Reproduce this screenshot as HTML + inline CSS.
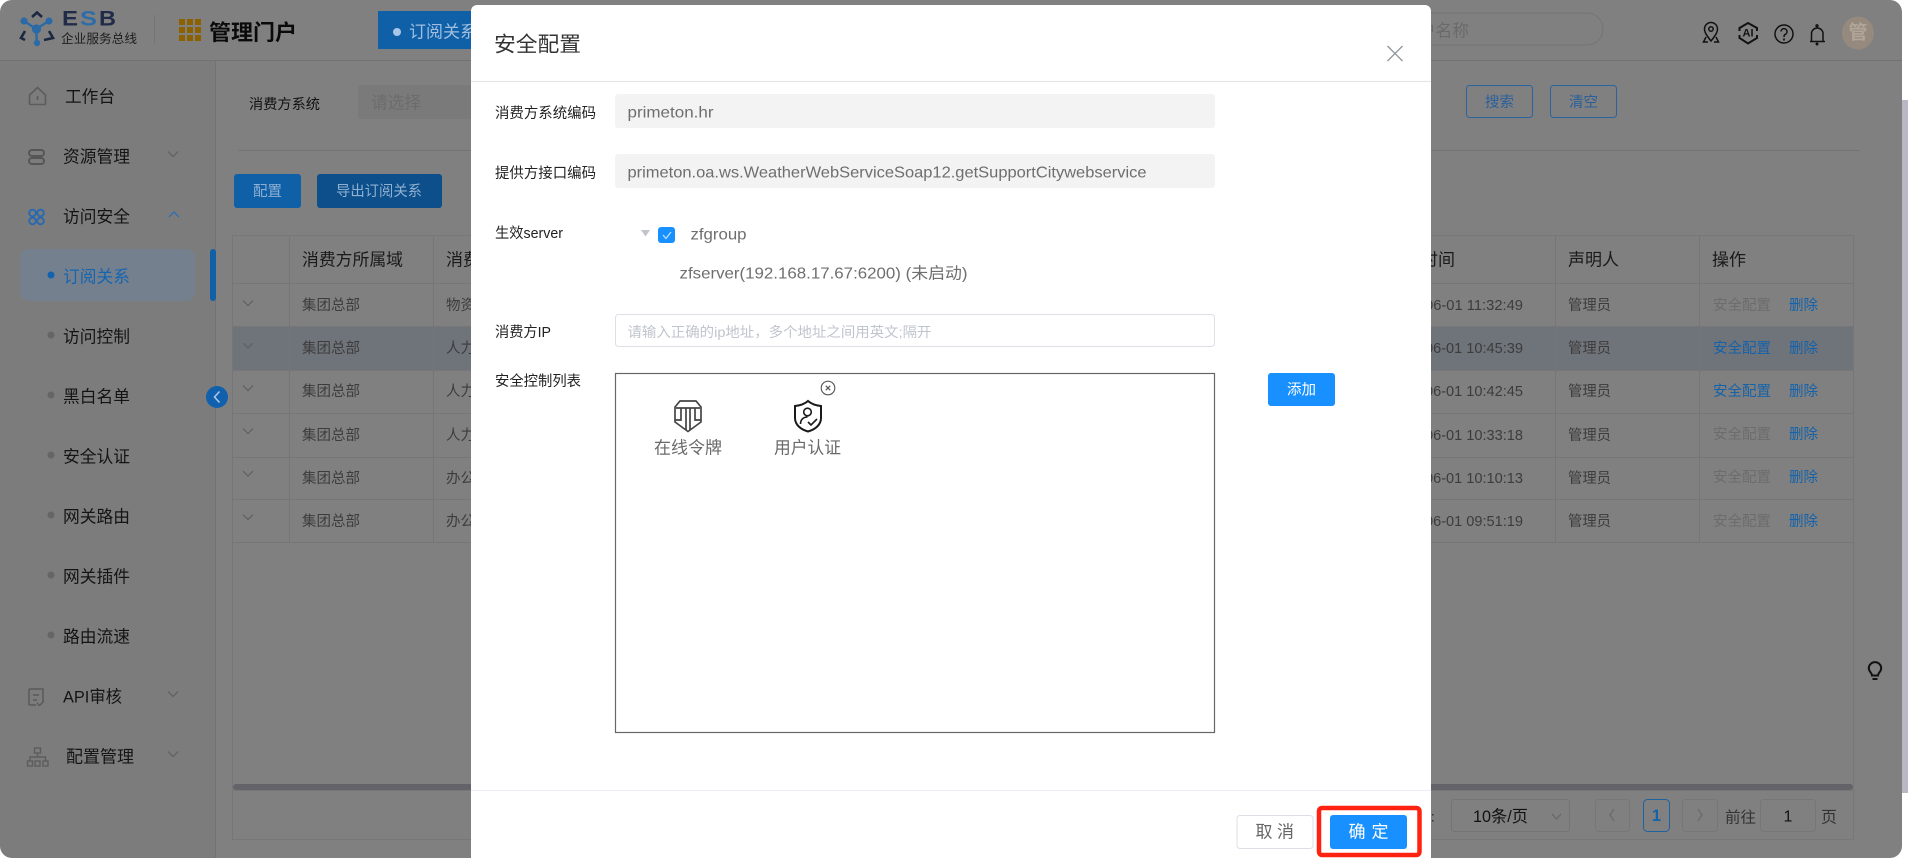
<!DOCTYPE html>
<html lang="zh"><head><meta charset="utf-8"><title>安全配置</title>
<style>
html,body{margin:0;padding:0;background:#fff;width:1908px;height:858px;overflow:hidden}
svg{display:block}
text{font-family:"Liberation Sans","Noto Sans CJK SC",sans-serif;dominant-baseline:central;white-space:pre;transform:translateY(1px)}
.n{font-size:17px;fill:#141414}
.c{font-size:14.5px;fill:#3c3c3c}
.h{font-size:17px;fill:#1a1a1a}
.d{font-size:14.5px;fill:#6c6c6c}
.b{font-size:14.5px;fill:#1462aa}
.l{font-size:14.5px;fill:#222}
.i{font-size:16px;fill:#6e6e6e}
</style></head><body>
<svg width="1908" height="858" viewBox="0 0 1908 858" xmlns="http://www.w3.org/2000/svg">
<rect width="1908" height="858" fill="#fff"/>
<rect x="0" y="0" width="1902" height="858" rx="12" fill="#808080"/>
<rect x="1902" y="100" width="6" height="693" fill="#b8b8c4"/>
<!-- sidebar -->
<rect x="0" y="61" width="215" height="797" fill="#7c7c7c"/>
<path d="M12 858H0V846A12 12 0 0 0 12 858Z" fill="#fff"/>
<line x1="215.5" y1="61" x2="215.5" y2="858" stroke="#737373"/>
<line x1="0" y1="60.5" x2="1902" y2="60.5" stroke="#727272"/>
<!-- logo -->
<g fill="none" stroke="#2a6aa6" stroke-width="2.4"><path d="M24 21L36 29L49 21M36 29L37 43"/></g>
<g fill="#2a6aa6"><circle cx="24" cy="21" r="3.6"/><circle cx="49" cy="21" r="3.6"/><circle cx="36.5" cy="29" r="4.6"/><circle cx="37" cy="43" r="3.2"/></g>
<g fill="none" stroke="#1c2740" stroke-width="2.6"><path d="M32 17L37 12.5L42 17M25 31L21 38L25 40M49 31L53 38L44 40"/></g>
<text x="62" y="18" font-weight="700" fill="#1f2b47" textLength="16" lengthAdjust="spacingAndGlyphs" style="font-size:21px">E</text>
<text x="80" y="18" font-weight="700" fill="#2d6ca8" textLength="17" lengthAdjust="spacingAndGlyphs" style="font-size:21px">S</text>
<text x="99" y="18" font-weight="700" fill="#1f2b47" textLength="17" lengthAdjust="spacingAndGlyphs" style="font-size:21px">B</text>
<text x="61" y="38" font-size="12.6" fill="#1e1e1e" textLength="76" lengthAdjust="spacingAndGlyphs">企业服务总线</text>
<line x1="154.5" y1="15" x2="154.5" y2="43" stroke="#747474"/>
<g fill="#8c6200"><rect x="179" y="19" width="6" height="6"/><rect x="187" y="19" width="6" height="6"/><rect x="195" y="19" width="6" height="6"/><rect x="179" y="27" width="6" height="6"/><rect x="187" y="27" width="6" height="6"/><rect x="195" y="27" width="6" height="6"/><rect x="179" y="35" width="6" height="6"/><rect x="187" y="35" width="6" height="6"/><rect x="195" y="35" width="6" height="6"/></g>
<text x="209" y="32" font-size="21.5" font-weight="700" fill="#0a0a0a" textLength="88" lengthAdjust="spacingAndGlyphs">管理门户</text>
<rect x="378" y="11" width="120" height="38" fill="#1060a8"/>
<circle cx="397" cy="32" r="4" fill="#a9c6e6"/>
<text x="409" y="31" font-size="17" fill="#a0bfe0" textLength="68" lengthAdjust="spacingAndGlyphs">订阅关系</text>
<!-- sidebar items -->
<path d="M29.5 95L37.5 87.5L45.5 95V103.5Q45.5 104.5 44.5 104.5H30.5Q29.5 104.5 29.5 103.5Z" fill="none" stroke="#5c5c5c" stroke-width="1.6"/><line x1="37.5" y1="96" x2="37.5" y2="100" stroke="#5c5c5c" stroke-width="1.6"/>
<text class="n" x="65" y="96" textLength="50" lengthAdjust="spacingAndGlyphs">工作台</text>
<g fill="none" stroke="#565656" stroke-width="2"><rect x="29" y="150" width="15" height="6" rx="3"/><rect x="29" y="158" width="15" height="6" rx="3"/></g>
<text class="n" x="63" y="156" textLength="67" lengthAdjust="spacingAndGlyphs">资源管理</text>
<path d="M168 151.500L173 156.500L178 151.500" fill="none" stroke="#5f5f5f" stroke-width="1.2"/>
<g fill="none" stroke="#2469b2" stroke-width="1.8"><circle cx="32.500" cy="213" r="3.300"/><circle cx="40.500" cy="213" r="3.300"/><circle cx="32.500" cy="221" r="3.300"/><circle cx="40.500" cy="221" r="3.300"/></g>
<text class="n" x="63" y="216" textLength="67" lengthAdjust="spacingAndGlyphs">访问安全</text>
<path d="M169 217L174 212L179 217" fill="none" stroke="#2f6fb0" stroke-width="1.3"/>
<rect x="20" y="249" width="175" height="52" rx="9" fill="#75808f"/>
<rect x="210" y="249" width="6" height="52" rx="3" fill="#1060a8"/>
<circle cx="51" cy="275" r="3.500" fill="#1262ae"/>
<text x="63" y="276" font-size="17" fill="#1565b0" textLength="67" lengthAdjust="spacingAndGlyphs">订阅关系</text>
<g fill="#656565"><circle cx="51" cy="335" r="3.500"/><circle cx="51" cy="395" r="3.500"/><circle cx="51" cy="455" r="3.500"/><circle cx="51" cy="515" r="3.500"/><circle cx="51" cy="575" r="3.500"/><circle cx="51" cy="635" r="3.500"/></g>
<text class="n" x="63" y="336" textLength="67" lengthAdjust="spacingAndGlyphs">访问控制</text>
<text class="n" x="63" y="396" textLength="67" lengthAdjust="spacingAndGlyphs">黑白名单</text>
<text class="n" x="63" y="456" textLength="67" lengthAdjust="spacingAndGlyphs">安全认证</text>
<text class="n" x="63" y="516" textLength="67" lengthAdjust="spacingAndGlyphs">网关路由</text>
<text class="n" x="63" y="576" textLength="67" lengthAdjust="spacingAndGlyphs">网关插件</text>
<text class="n" x="63" y="636" textLength="67" lengthAdjust="spacingAndGlyphs">路由流速</text>
<text class="n" x="63" y="696" textLength="59" lengthAdjust="spacingAndGlyphs">API审核</text>
<text class="n" x="66" y="756" textLength="68" lengthAdjust="spacingAndGlyphs">配置管理</text>
<path d="M29 704V690Q29 689 30 689H43V702M29 704Q29 705 30 705H36M33 695H39M33 700H37M37 703L39.500 705.500L44 701" fill="none" stroke="#5a5a5a" stroke-width="1.500"/>
<path d="M168 691.500L173 696.500L178 691.500M168 751.500L173 756.500L178 751.500" fill="none" stroke="#5f5f5f" stroke-width="1.200"/>
<g fill="none" stroke="#5c5c5c" stroke-width="1.400"><rect x="34.500" y="748" width="6" height="5"/><rect x="27.500" y="761" width="5" height="5"/><rect x="35" y="761" width="5" height="5"/><rect x="43" y="761" width="5" height="5"/><path d="M37.500 753V757M30 761V757H45.500V761"/></g>
<circle cx="217" cy="397" r="11" fill="#1060ae"/>
<path d="M219.500 391.500L214.500 397L219.500 402.500" fill="none" stroke="#a9c6e6" stroke-width="1.600"/>
<!-- filter -->
<text x="249" y="104" font-size="14.3" fill="#111" textLength="71" lengthAdjust="spacingAndGlyphs">消费方系统</text>
<rect x="358" y="85" width="140" height="34" rx="3" fill="#7a7a7a"/>
<text x="371" y="102" font-size="17" fill="#6c6c6c" textLength="50" lengthAdjust="spacingAndGlyphs">请选择</text>
<line x1="238" y1="150.500" x2="1860" y2="150.500" stroke="#747474"/>
<rect x="234" y="174" width="67" height="34" rx="3" fill="#1060a8"/>
<text x="253" y="191" font-size="14.500" fill="#8fb0d2" textLength="29" lengthAdjust="spacingAndGlyphs">配置</text>
<rect x="317" y="174" width="125" height="34" rx="3" fill="#0d4f8a"/>
<text x="336" y="191" font-size="14.500" fill="#8fb0d2" textLength="86" lengthAdjust="spacingAndGlyphs">导出订阅关系</text>
<rect x="1000" y="13" width="603" height="32" rx="16" fill="none" stroke="#747474"/>
<text x="1419" y="30" font-size="17" fill="#6a6a6a" textLength="50" lengthAdjust="spacingAndGlyphs">户名称</text>
<rect x="1466.500" y="85.500" width="66" height="32" rx="3" fill="none" stroke="#2a64a0"/>
<text x="1485" y="102" font-size="14.500" fill="#2a5f9c" textLength="29" lengthAdjust="spacingAndGlyphs">搜索</text>
<rect x="1550.500" y="85.500" width="66" height="32" rx="3" fill="none" stroke="#2a64a0"/>
<text x="1569" y="102" font-size="14.500" fill="#2a5f9c" textLength="29" lengthAdjust="spacingAndGlyphs">清空</text>
<!-- top right icons -->
<g fill="none" stroke="#111" stroke-width="1.500">
<path d="M1711 41C1707 36 1704.500 32.500 1704.500 29A6.500 6.500 0 0 1 1717.500 29C1717.500 32.500 1715 36 1711 41Z"/><circle cx="1711" cy="29" r="2.200"/><path d="M1706 37L1703.500 42H1708M1716 37L1718.500 42H1714"/>
<path d="M1739.500 31V28L1748 23L1757 28V31M1739.500 35V38L1748 43.500L1757 38V35" stroke-width="2"/>
<circle cx="1784" cy="34" r="9"/><path d="M1781 31.500A3 3 0 1 1 1785 34.500Q1784 35.200 1784 37"/><circle cx="1784" cy="39.500" r=".4"/>
<path d="M1810 41.500H1825M1811.500 41.500V33A5.800 5.800 0 0 1 1823 33V41.500"/><circle cx="1817" cy="25.800" r=".9"/><circle cx="1817" cy="44" r=".7"/>
</g>
<text x="1748" y="32.500" font-size="11" font-weight="700" fill="#111" text-anchor="middle">AI</text>
<ellipse cx="1858" cy="33" rx="16" ry="16.500" fill="#968a7f"/>
<text x="1858" y="32" font-size="19" font-weight="700" fill="#b0a599" text-anchor="middle">管</text>
<!-- table -->
<rect x="232.500" y="235.500" width="1621" height="604" fill="none" stroke="#777"/>
<rect x="233" y="326" width="1620" height="44" fill="#6f737a"/>
<g stroke="#767676"><line x1="233" y1="283.500" x2="1853" y2="283.500"/><line x1="233" y1="326.500" x2="1853" y2="326.500"/><line x1="233" y1="370.500" x2="1853" y2="370.500"/><line x1="233" y1="413.500" x2="1853" y2="413.500"/><line x1="233" y1="457.500" x2="1853" y2="457.500"/><line x1="233" y1="499.500" x2="1853" y2="499.500"/><line x1="233" y1="542.500" x2="1853" y2="542.500"/>
<line x1="289.500" y1="236" x2="289.500" y2="543"/><line x1="433.500" y1="236" x2="433.500" y2="543"/><line x1="1555.500" y1="236" x2="1555.500" y2="543"/><line x1="1699.500" y1="236" x2="1699.500" y2="543"/></g>
<rect x="233" y="784" width="1620" height="6" rx="3" fill="#636369"/>
<line x1="233" y1="790.500" x2="1853" y2="790.500" stroke="#777"/>
<text class="h" x="302" y="259" textLength="101" lengthAdjust="spacingAndGlyphs">消费方所属域</text>
<text class="h" x="446" y="259" textLength="34" lengthAdjust="spacingAndGlyphs">消费</text>
<text class="h" x="1421" y="259" textLength="34" lengthAdjust="spacingAndGlyphs">时间</text>
<text class="h" x="1568" y="259" textLength="51" lengthAdjust="spacingAndGlyphs">声明人</text>
<text class="h" x="1712" y="259" textLength="34" lengthAdjust="spacingAndGlyphs">操作</text>
<path d="M243 300.500L248 305.500L253 300.500M243 343L248 348L253 343M243 385.500L248 390.500L253 385.500M243 428.500L248 433.500L253 428.500M243 471L248 476L253 471M243 514.500L248 519.500L253 514.500" fill="none" stroke="#5f5f5f" stroke-width="1.200"/>
<text class="c" x="302" y="305" textLength="58" lengthAdjust="spacingAndGlyphs">集团总部</text><text class="c" x="446" y="305" textLength="29" lengthAdjust="spacingAndGlyphs">物资</text><text class="c" x="1425" y="305" textLength="98" lengthAdjust="spacingAndGlyphs">06-01 11:32:49</text><text class="c" x="1568" y="305" textLength="43" lengthAdjust="spacingAndGlyphs">管理员</text><text class="d" x="1713" y="305" textLength="58" lengthAdjust="spacingAndGlyphs">安全配置</text><text class="b" x="1789" y="305" textLength="29" lengthAdjust="spacingAndGlyphs">删除</text>
<text class="c" x="302" y="348" textLength="58" lengthAdjust="spacingAndGlyphs">集团总部</text><text class="c" x="446" y="348" textLength="29" lengthAdjust="spacingAndGlyphs">人力</text><text class="c" x="1425" y="348" textLength="98" lengthAdjust="spacingAndGlyphs">06-01 10:45:39</text><text class="c" x="1568" y="348" textLength="43" lengthAdjust="spacingAndGlyphs">管理员</text><text class="b" x="1713" y="348" textLength="58" lengthAdjust="spacingAndGlyphs">安全配置</text><text class="b" x="1789" y="348" textLength="29" lengthAdjust="spacingAndGlyphs">删除</text>
<text class="c" x="302" y="391" textLength="58" lengthAdjust="spacingAndGlyphs">集团总部</text><text class="c" x="446" y="391" textLength="29" lengthAdjust="spacingAndGlyphs">人力</text><text class="c" x="1425" y="391" textLength="98" lengthAdjust="spacingAndGlyphs">06-01 10:42:45</text><text class="c" x="1568" y="391" textLength="43" lengthAdjust="spacingAndGlyphs">管理员</text><text class="b" x="1713" y="391" textLength="58" lengthAdjust="spacingAndGlyphs">安全配置</text><text class="b" x="1789" y="391" textLength="29" lengthAdjust="spacingAndGlyphs">删除</text>
<text class="c" x="302" y="435" textLength="58" lengthAdjust="spacingAndGlyphs">集团总部</text><text class="c" x="446" y="435" textLength="29" lengthAdjust="spacingAndGlyphs">人力</text><text class="c" x="1425" y="435" textLength="98" lengthAdjust="spacingAndGlyphs">06-01 10:33:18</text><text class="c" x="1568" y="435" textLength="43" lengthAdjust="spacingAndGlyphs">管理员</text><text class="d" x="1713" y="434" textLength="58" lengthAdjust="spacingAndGlyphs">安全配置</text><text class="b" x="1789" y="434" textLength="29" lengthAdjust="spacingAndGlyphs">删除</text>
<text class="c" x="302" y="478" textLength="58" lengthAdjust="spacingAndGlyphs">集团总部</text><text class="c" x="446" y="478" textLength="29" lengthAdjust="spacingAndGlyphs">办公</text><text class="c" x="1425" y="478" textLength="98" lengthAdjust="spacingAndGlyphs">06-01 10:10:13</text><text class="c" x="1568" y="478" textLength="43" lengthAdjust="spacingAndGlyphs">管理员</text><text class="d" x="1713" y="477" textLength="58" lengthAdjust="spacingAndGlyphs">安全配置</text><text class="b" x="1789" y="477" textLength="29" lengthAdjust="spacingAndGlyphs">删除</text>
<text class="c" x="302" y="521" textLength="58" lengthAdjust="spacingAndGlyphs">集团总部</text><text class="c" x="446" y="521" textLength="29" lengthAdjust="spacingAndGlyphs">办公</text><text class="c" x="1425" y="521" textLength="98" lengthAdjust="spacingAndGlyphs">06-01 09:51:19</text><text class="c" x="1568" y="521" textLength="43" lengthAdjust="spacingAndGlyphs">管理员</text><text class="d" x="1713" y="521" textLength="58" lengthAdjust="spacingAndGlyphs">安全配置</text><text class="b" x="1789" y="521" textLength="29" lengthAdjust="spacingAndGlyphs">删除</text>
<!-- pagination -->
<rect x="1432" y="814" width="1.500" height="1.500" fill="#333"/><rect x="1432" y="820" width="1.500" height="1.500" fill="#333"/>
<rect x="1451.500" y="799.500" width="118" height="32" rx="3" fill="none" stroke="#747474"/>
<text x="1473" y="816" font-size="16.500" fill="#111" textLength="55" lengthAdjust="spacingAndGlyphs">10条/页</text>
<path d="M1552 814L1556.500 819L1561 814" fill="none" stroke="#666" stroke-width="1.200"/>
<rect x="1595.500" y="799.500" width="34" height="32" rx="3" fill="none" stroke="#777"/>
<path d="M1614 809L1610 815L1614 821" fill="none" stroke="#6c6c6c" stroke-width="1.500"/>
<rect x="1643.500" y="799.500" width="26" height="32" rx="4" fill="none" stroke="#1f609f"/>
<text x="1656.500" y="815" font-size="16.500" font-weight="700" fill="#1462aa" text-anchor="middle">1</text>
<rect x="1682.500" y="799.500" width="35" height="32" rx="3" fill="none" stroke="#777"/>
<path d="M1698 809L1702 815L1698 821" fill="none" stroke="#6c6c6c" stroke-width="1.500"/>
<text x="1725" y="817" font-size="15.500" fill="#333" textLength="31" lengthAdjust="spacingAndGlyphs">前往</text>
<rect x="1760.500" y="799.500" width="55" height="32" rx="3" fill="none" stroke="#777"/>
<text x="1788" y="816" font-size="16" fill="#111" text-anchor="middle">1</text>
<text x="1821" y="817" font-size="16" fill="#333" textLength="16" lengthAdjust="spacingAndGlyphs">页</text>
<!-- bulb -->
<g fill="none" stroke="#111" stroke-width="2"><path d="M1872 675.500C1872 672.500 1868.800 672 1868.800 668.300A6.200 6.200 0 0 1 1881.200 668.300C1881.200 672 1878 672.500 1878 675.500Z"/><line x1="1872.500" y1="679" x2="1877.500" y2="679"/></g>
<!-- modal -->
<path d="M471 858V11A6 6 0 0 1 477 5H1425A6 6 0 0 1 1431 11V858Z" fill="#fff"/>
<line x1="471" y1="81.500" x2="1431" y2="81.500" stroke="#e6e6e6" stroke-width="1.200"/>
<text x="494" y="44" font-size="21" fill="#333" textLength="87" lengthAdjust="spacingAndGlyphs">安全配置</text>
<path d="M1387.500 46L1402.500 61M1402.500 46L1387.500 61" stroke="#8f9399" stroke-width="1.300" fill="none"/>
<text class="l" x="495" y="113" textLength="101" lengthAdjust="spacingAndGlyphs">消费方系统编码</text>
<rect x="615" y="94" width="600" height="34" rx="3" fill="#f3f3f3"/>
<text class="i" x="627.500" y="112" textLength="86" lengthAdjust="spacingAndGlyphs">primeton.hr</text>
<text class="l" x="495" y="173" textLength="101" lengthAdjust="spacingAndGlyphs">提供方接口编码</text>
<rect x="615" y="154" width="600" height="34" rx="3" fill="#f3f3f3"/>
<text class="i" x="627.500" y="172" textLength="519" lengthAdjust="spacingAndGlyphs">primeton.oa.ws.WeatherWebServiceSoap12.getSupportCitywebservice</text>
<text class="l" x="495" y="233" textLength="68" lengthAdjust="spacingAndGlyphs">生效server</text>
<path d="M641 230H650L645.500 236.500Z" fill="#c0c4cc"/>
<rect x="658" y="227" width="17" height="16" rx="3" fill="#1890ff"/>
<path d="M663 235L666 238.500L671 232" fill="none" stroke="#bfe0ff" stroke-width="1.200"/>
<text class="i" x="690.500" y="234" textLength="56" lengthAdjust="spacingAndGlyphs">zfgroup</text>
<text class="i" x="679.500" y="273" textLength="288" lengthAdjust="spacingAndGlyphs">zfserver(192.168.17.67:6200) (未启动)</text>
<text class="l" x="495" y="332" textLength="56" lengthAdjust="spacingAndGlyphs">消费方IP</text>
<rect x="615.500" y="314.500" width="599" height="32" rx="3" fill="#fff" stroke="#dcdfe6"/>
<text x="627.500" y="331" font-size="14" fill="#c0c4cc" textLength="304" lengthAdjust="spacingAndGlyphs">请输入正确的ip地址，多个地址之间用英文;隔开</text>
<text class="l" x="495" y="381" textLength="86" lengthAdjust="spacingAndGlyphs">安全控制列表</text>
<rect x="615.500" y="373.500" width="599" height="359" fill="#fff" stroke="#666" stroke-width="1.200"/>
<rect x="1268" y="373" width="67" height="33" rx="3" fill="#1890ff"/>
<text x="1301.500" y="389.500" font-size="14.500" fill="#fff" text-anchor="middle">添加</text>
<g fill="none" stroke="#444" stroke-width="1.700">
<path d="M680 401H696L701 407V422L688 431.500L675 422V407Z"/>
<path d="M676 408H700M686 408V430M690 408V430M681 408V420H675.500M695 408V420H700.500"/>
</g>
<circle cx="828" cy="388" r="6.800" fill="none" stroke="#555" stroke-width="1.100"/>
<path d="M825.800 385.800L830.200 390.200M830.200 385.800L825.800 390.200" stroke="#555" stroke-width="1.200"/>
<g fill="none" stroke="#1a1a1a" stroke-width="2">
<path d="M808 401C812 404.500 816 405.500 821 406V418C821 425 815 429.500 808 431.500C801 429.500 795 425 795 418V406C800 405.500 804 404.500 808 401Z"/>
<circle cx="807.500" cy="412" r="3.800" stroke-width="1.600"/>
<path d="M800.500 424C800.500 419 804 417 807.500 417M808 422L811 425L817 419" stroke-width="1.600"/>
</g>
<text x="654" y="447" font-size="17" fill="#6a6a6a" textLength="68" lengthAdjust="spacingAndGlyphs">在线令牌</text>
<text x="774" y="447" font-size="17" fill="#6a6a6a" textLength="67" lengthAdjust="spacingAndGlyphs">用户认证</text>
<line x1="471" y1="790.500" x2="1431" y2="790.500" stroke="#ebeef5"/>
<rect x="1237" y="815.500" width="76" height="33" rx="3" fill="#fff" stroke="#dcdfe6"/>
<text x="1255.500" y="831" font-size="17" fill="#666" textLength="38.500" lengthAdjust="spacing">取消</text>
<rect x="1330" y="815" width="77" height="34" rx="3" fill="#1890ff"/>
<text x="1348.500" y="831" font-size="17" fill="#fff" textLength="40" lengthAdjust="spacing">确定</text>
<rect x="1319" y="808" width="100.500" height="47" rx="3" fill="none" stroke="#ff2210" stroke-width="4.500"/>
</svg>
</body></html>
